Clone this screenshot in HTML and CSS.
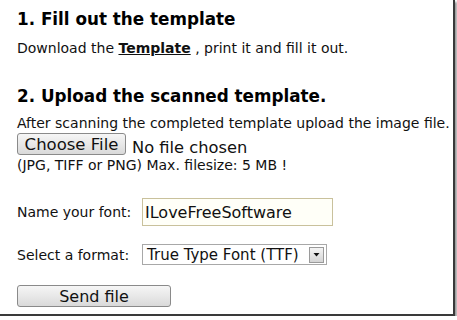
FILE: index.html
```html
<!DOCTYPE html>
<html>
<head>
<meta charset="utf-8">
<link rel="stylesheet" href="styles.css">
</head>
<body>
<div class="frame">
  <h1 class="step">1. Fill out the template</h1>
  <p class="text first">Download the <a class="tpl" href="#">Template</a> , print it and fill it out.</p>
  <h1 class="step step2">2. Upload the scanned template.</h1>
  <p class="text after">After scanning the completed template upload the image file.</p>
  <div class="filerow">
    <span class="btn choose">Choose File</span>
    <span class="nofile">No file chosen</span>
  </div>
  <p class="text hint">(JPG, TIFF or PNG) Max. filesize: 5 MB !</p>
  <div class="form">
    <span class="label">Name your font:</span>
    <span class="input">ILoveFreeSoftware</span>
    <span class="label">Select a format:</span>
    <span class="select"><span class="selval">True Type Font (TTF)</span><span class="arrow"><svg width="9" height="9" viewBox="0 0 9 9"><path d="M1.5 3h6L4.5 6.5z" fill="#111"/></svg></span></span>
  </div>
  <span class="btn send">Send file</span>
</div>
</body>
</html>
```
FILE: styles.css
```css
html, body { margin: 0; padding: 0; background: #fff; }
body { font-family: "DejaVu Sans", Verdana, sans-serif; color: #111; }
.frame {
  width: 436px;
  height: 314px;
  padding-left: 17px;
  box-sizing: content-box;
  border-right: 2px solid #3a3a3a;
  border-bottom: 2px solid #3a3a3a;
  box-shadow: 2px 2px 2px #9a9a9a;
  overflow: hidden;
}
.step { font-size: 16.8px; font-weight: bold; margin: 0; padding-top: 9px; line-height: 20px; color: #000; }
.step2 { padding-top: 30px; }
.text { font-size: 14px; margin: 0; line-height: 16px; }
.first { margin-top: 11px; }
.after { margin-top: 9px; }
.tpl { color: #111; font-weight: bold; text-decoration: underline; }
.filerow { display: flex; align-items: flex-start; gap: 6px; margin-top: 2px; height: 22px; }
.btn {
  display: inline-flex; align-items: center; justify-content: center;
  box-sizing: border-box;
  border: 1px solid #8a8a8a; border-radius: 3px;
  background: linear-gradient(#f6f6f6, #e8e8e8 50%, #d9d9d9);
  color: #111;
}
.choose { width: 109px; height: 22px; font-size: 16.5px; }
.nofile { font-size: 16.3px; padding-top: 7px; line-height: 15px; }
.hint { margin-top: 2px; }
.form {
  display: grid; grid-template-columns: 125px auto; align-items: center;
  justify-content: start; row-gap: 18px; margin-top: 25px; font-size: 14px;
}
.label { line-height: 16px; }
.input {
  box-sizing: border-box; width: 191px; height: 28px;
  border: 1px solid #c9c19c; background: #fffff8;
  font-size: 16px; padding: 1px 0 0 2px; display: flex; align-items: center;
}
.select {
  box-sizing: border-box; width: 185px; height: 21px;
  border: 1px solid #a8a8a8; display: flex; align-items: center; justify-content: space-between;
  font-size: 15px; padding-left: 4px; padding-right: 2px;
}
.arrow {
  width: 15px; height: 16px; box-sizing: border-box; border: 1px solid #9a9a9a;
  background: linear-gradient(#f4f4f4, #d4d4d4); display: flex; align-items: center; justify-content: center;
}
.arrow svg { display: block; }
.send { width: 154px; height: 22px; font-size: 16px; margin-top: 20px; }
```
